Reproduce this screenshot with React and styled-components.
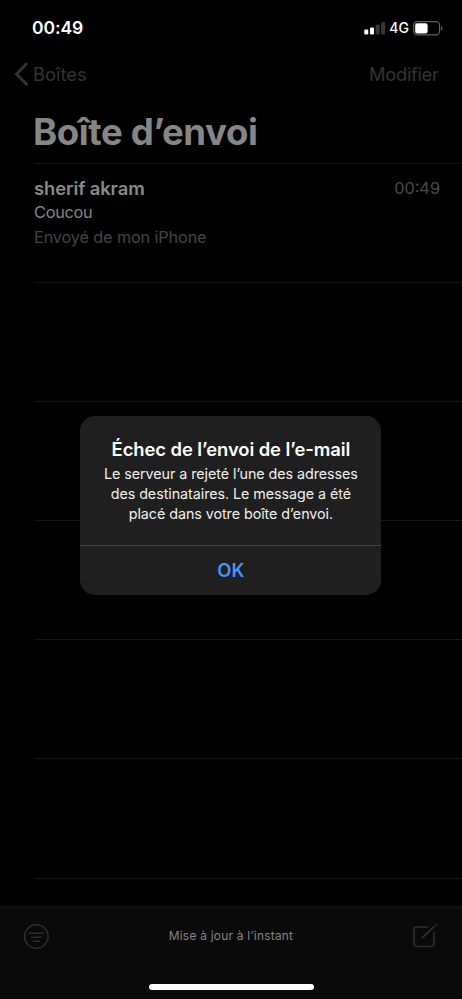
import React from 'react';
import styled, { createGlobalStyle } from 'styled-components';

const GlobalStyle = createGlobalStyle`
  * { box-sizing: border-box; }
  html, body { margin: 0; background: #000; }
  body { font-family: Inter, "Liberation Sans", sans-serif; -webkit-font-smoothing: antialiased; }
`;

const Screen = styled.main`
  position: relative;
  width: 462px;
  height: 999px;
  overflow: hidden;
  display: flex;
  flex-direction: column;
  background: #000;
  border-bottom: 1px solid #000;
`;

const StatusBar = styled.header`
  display: flex;
  align-items: center;
  justify-content: space-between;
  height: 56px;
  padding: 0 19px 0 32px;
  color: #fff;
`;

const Clock = styled.time`
  font-size: 17.5px;
  font-weight: 600;
  line-height: 22px;
  letter-spacing: -0.05px;
`;

const StatusIcons = styled.div`
  display: flex;
  align-items: center;
`;

const Network = styled.span`
  margin: 0 4px 0 3.5px;
  font-size: 14px;
  font-weight: 500;
  line-height: 18px;
`;

const NavBar = styled.nav`
  display: flex;
  align-items: center;
  justify-content: space-between;
  height: 35px;
  padding: 0 23.5px 0 14px;
`;

const NavButton = styled.button`
  display: flex;
  align-items: center;
  gap: 4px;
  padding: 0;
  border: 0;
  background: none;
  color: #333;
  font: 400 18.4px/24px Inter, sans-serif;
  letter-spacing: ${(p) => p.$tracking || '0'};
`;

const Title = styled.h1`
  height: 71.5px;
  margin: 0;
  padding: 18px 0 0 33px;
  color: #868686;
  font-size: 36.6px;
  font-weight: 700;
  line-height: 46px;
  letter-spacing: -0.4px;
`;

const MessageList = styled.ul`
  flex: 1;
  min-height: 0;
  overflow: hidden;
  margin: 0;
  padding: 0 0 0 34px;
  list-style: none;
`;

const MessageRow = styled.li`
  height: 119.2px;
  padding: 11.8px 22px 0 0;
  border-top: 1px solid #141414;
`;

const RowHead = styled.div`
  display: flex;
  align-items: center;
  justify-content: space-between;
  height: 25px;
`;

const Sender = styled.span`
  color: #8a8a8a;
  font-size: 18.4px;
  font-weight: 600;
  letter-spacing: -0.08px;
`;

const SentAt = styled.time`
  color: #4b4b4b;
  font-size: 16.3px;
`;

const Line = styled.div`
  height: 24.5px;
  line-height: 24px;
  font-size: 16.3px;
  color: ${(p) => (p.$muted ? '#454545' : '#858585')};
  letter-spacing: ${(p) => (p.$muted ? '-0.15px' : '-0.25px')};
`;

const Toolbar = styled.footer`
  display: grid;
  grid-template-columns: 60px 1fr 60px;
  grid-template-rows: 58px 1fr;
  align-items: center;
  height: 92px;
  flex: none;
  border-top: 1px solid #121212;
  background: #0a0a0a;
`;

const IconButton = styled.button`
  display: flex;
  justify-content: ${(p) => (p.$end ? 'flex-end' : 'flex-start')};
  padding: ${(p) => (p.$end ? '0 24px 0 0' : '0 0 0 23px')};
  border: 0;
  background: none;
  color: #303030;
`;

const SyncStatus = styled.p`
  margin: 0;
  text-align: center;
  color: #858585;
  font-size: 11.9px;
  line-height: 16px;
  letter-spacing: 0.25px;
`;

const HomeIndicator = styled.div`
  grid-column: 1 / -1;
  align-self: start;
  justify-self: center;
  width: 165px;
  height: 6px;
  margin-top: 19px;
  border-radius: 3px;
  background: #fff;
`;

const Alert = styled.section`
  position: absolute;
  top: 416px;
  left: 80.4px;
  width: 301px;
  height: 178.7px;
  display: flex;
  flex-direction: column;
  overflow: hidden;
  border-radius: 15px;
  background: #1f1f1f;
  text-align: center;
`;

const AlertBody = styled.div`
  height: 129px;
  padding-top: 20px;
`;

const AlertTitle = styled.h2`
  margin: 0;
  color: #fff;
  font-size: 18.4px;
  font-weight: 600;
  line-height: 26px;
  letter-spacing: -0.07px;
`;

const AlertText = styled.p`
  margin: 2px 0 0;
  color: #f0f0f0;
  font-size: 14.3px;
  line-height: 19.8px;
  letter-spacing: -0.05px;
`;

const AlertButton = styled.button`
  flex: 1;
  padding: 0;
  border: 0;
  border-top: 1px solid #464646;
  background: none;
  color: #4793f8;
  font: 600 18.4px/24px Inter, sans-serif;
`;

const SignalIcon = () => (
  <svg width="22" height="14" viewBox="0 0 22 14">
    <rect x="0.3" y="8.6" width="4" height="5" rx="1" fill="#fff" />
    <rect x="6" y="6.6" width="4" height="7" rx="1" fill="#fff" />
    <rect x="11.6" y="3.8" width="4" height="9.8" rx="1" fill="#383838" />
    <rect x="17.1" y="1.1" width="4" height="12.5" rx="1" fill="#383838" />
  </svg>
);

const BatteryIcon = () => (
  <svg width="30" height="15" viewBox="0 0 30 15">
    <rect x="0.7" y="0.7" width="25.8" height="13.2" rx="3.6" fill="none" stroke="#606060" strokeWidth="1.2" />
    <rect x="2.2" y="2.2" width="12.4" height="10.2" rx="2" fill="#fff" />
    <path d="M28 5v4.8c1.9-.8 1.9-4 0-4.8z" fill="#606060" />
  </svg>
);

const BackIcon = () => (
  <svg width="15" height="24" viewBox="0 0 15 24" fill="none" stroke="#333" strokeWidth="3" strokeLinecap="round" strokeLinejoin="miter">
    <path d="M12.3 2 2.5 12l9.8 10" />
  </svg>
);

const FilterIcon = () => (
  <svg width="27" height="27" viewBox="0 0 27 27" fill="none" stroke="currentColor" strokeWidth="1.5" strokeLinecap="round">
    <circle cx="13.4" cy="13.5" r="11.7" />
    <path d="M6.5 10.2h13.8M8.7 14.2h9.4M10.4 18.2h6" />
  </svg>
);

const ComposeIcon = () => (
  <svg width="26" height="26" viewBox="0 0 26 26" fill="none" stroke="currentColor" strokeWidth="1.5" strokeLinecap="round">
    <path d="M16 4H4.5A2.5 2.5 0 0 0 2 6.5V21a2.5 2.5 0 0 0 2.5 2.5h15A2.5 2.5 0 0 0 22 21V9" />
    <path d="M10.8 14.4 21.8 3.9" strokeWidth="1.9" />
    <path d="M24.2 1.7 24.4 1.5" strokeWidth="2" />
  </svg>
);

const messages = [
  { sender: 'sherif akram', time: '00:49', subject: 'Coucou', preview: 'Envoyé de mon iPhone' },
];
const EMPTY_ROWS = 6;

export default function App() {
  return (
    <>
      <GlobalStyle />
      <Screen>
        <StatusBar>
          <Clock>00:49</Clock>
          <StatusIcons>
            <SignalIcon />
            <Network>4G</Network>
            <BatteryIcon />
          </StatusIcons>
        </StatusBar>
        <NavBar>
          <NavButton><BackIcon />Boîtes</NavButton>
          <NavButton $tracking="-0.35px">Modifier</NavButton>
        </NavBar>
        <Title>Boîte d’envoi</Title>
        <MessageList>
          {messages.map((m) => (
            <MessageRow key={m.sender}>
              <RowHead>
                <Sender>{m.sender}</Sender>
                <SentAt>{m.time}</SentAt>
              </RowHead>
              <Line>{m.subject}</Line>
              <Line $muted>{m.preview}</Line>
            </MessageRow>
          ))}
          {Array.from({ length: EMPTY_ROWS }, (_, i) => <MessageRow key={i} />)}
        </MessageList>
        <Toolbar>
          <IconButton aria-label="Filtrer"><FilterIcon /></IconButton>
          <SyncStatus>Mise à jour à l’instant</SyncStatus>
          <IconButton $end aria-label="Nouveau message"><ComposeIcon /></IconButton>
          <HomeIndicator />
        </Toolbar>
        <Alert role="alertdialog">
          <AlertBody>
            <AlertTitle>Échec de l’envoi de l’e-mail</AlertTitle>
            <AlertText>
              Le serveur a rejeté l’une des adresses<br />
              des destinataires. Le message a été<br />
              placé dans votre boîte d’envoi.
            </AlertText>
          </AlertBody>
          <AlertButton>OK</AlertButton>
        </Alert>
      </Screen>
    </>
  );
}
